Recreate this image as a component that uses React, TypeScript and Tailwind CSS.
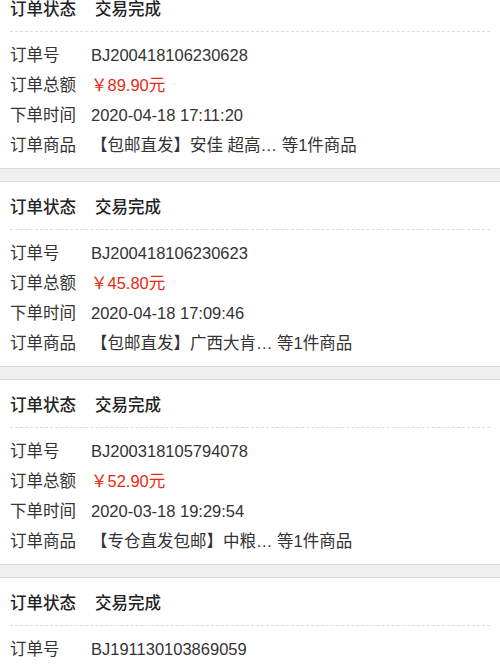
import React from 'react'

type Order = {
  no: string
  amount: string
  time: string
  goods: string
}

const orders: Order[] = [
  { no: 'BJ200418106230628', amount: '89.90', time: '2020-04-18 17:11:20', goods: '【包邮直发】安佳 超高… 等1件商品' },
  { no: 'BJ200418106230623', amount: '45.80', time: '2020-04-18 17:09:46', goods: '【包邮直发】广西大肯… 等1件商品' },
  { no: 'BJ200318105794078', amount: '52.90', time: '2020-03-18 19:29:54', goods: '【专仓直发包邮】中粮… 等1件商品' },
  { no: 'BJ191130103869059', amount: '', time: '', goods: '' },
]

function Row({ label, children }: { label: string; children: React.ReactNode }) {
  return (
    <div className="flex items-center h-[30px]">
      <span className="w-[81px] shrink-0 text-[#333]">{label}</span>
      <span className="whitespace-nowrap">{children}</span>
    </div>
  )
}

function OrderCard({ order }: { order: Order }) {
  return (
    <div className="bg-white">
      <div className="flex items-center h-[47px] pt-[4px] px-[10px] font-medium text-[#222]">
        <span className="w-[85px]">订单状态</span>
        <span>交易完成</span>
      </div>
      <div className="mx-[10px] border-t border-dashed border-[#dcdcdc]" />
      <div className="px-[10px] py-[8px] text-[#333]">
        <Row label="订单号">{order.no}</Row>
        {order.amount && (
          <>
            <Row label="订单总额">
              <span className="text-[#e8290f]">￥{order.amount}元</span>
            </Row>
            <Row label="下单时间">{order.time}</Row>
            <Row label="订单商品">{order.goods}</Row>
          </>
        )}
      </div>
    </div>
  )
}

export default function App() {
  return (
    <div
      className="w-[500px] h-[667px] overflow-hidden bg-[#efefef] text-[16.5px]"
      style={{ fontFamily: '"Liberation Sans", "Noto Sans CJK SC", sans-serif' }}
    >
      <div className="-mt-[16px] flex flex-col">
        {orders.map((o, i) => (
          <div key={o.no}>
            {i > 0 && <div className="h-[14px] bg-[#efefef] border-y border-[#d9d9d9]" />}
            <OrderCard order={o} />
          </div>
        ))}
      </div>
    </div>
  )
}
